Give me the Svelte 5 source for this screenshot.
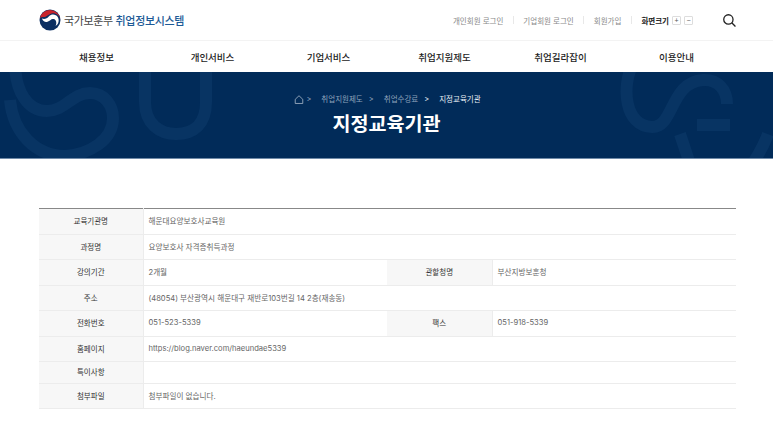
<script>
	const menus = ['채용정보', '개인서비스', '기업서비스', '취업지원제도', '취업길라잡이', '이용안내'];
	const utils = ['개인회원 로그인', '기업회원 로그인', '회원가입'];
</script>

<header class="top">
	<a class="logo" href="#top">
		<svg width="22" height="22" viewBox="0 0 22 22">
			<circle cx="11" cy="11" r="10.5" fill="#0b2f63" />
			<path d="M.7 9.5A10.5 10.5 0 0 1 21.4 10C20.5 6.5 16.5 3.5 12.5 4.5C9 5.3 8 8 5 8C3 8 1.5 8 .7 9.5Z" fill="#c8232c" />
			<path d="M3 9.5C5.5 10.5 8 9.5 10 7.2C12.5 4.8 17 5 19 8.5C20.5 11.5 19.5 15.5 16.5 17C18 14.5 17.5 10.5 14.5 10C12 9.6 11 12 8.5 12.8C6 13.5 3.8 12 3 9.5Z" fill="#fff" />
		</svg>
		<span class="logo-text">국가보훈부 <b>취업정보시스템</b></span>
	</a>
	<div class="util">
		{#each utils as item}
			<a href="#top">{item}</a>
			<i class="sep"></i>
		{/each}
		<span class="size-label">화면크기</span>
		<button class="size-btn">+</button>
		<button class="size-btn">−</button>
		<svg class="search" width="13" height="13" viewBox="0 0 14 14" fill="none" stroke="#222" stroke-width="1.4">
			<circle cx="5.8" cy="5.8" r="5" />
			<path d="M9.4 9.4L13.4 13.5" />
		</svg>
	</div>
</header>

<nav class="gnb">
	{#each menus as menu}
		<a href="#top">{menu}</a>
	{/each}
</nav>

<section class="banner">
	<svg class="deco" width="773" height="87" viewBox="0 0 773 87" fill="none" stroke="#083463" stroke-width="12">
		<path d="M15 -10C15 20 28 39 47 39C65 39 72 21 90 21C105 21 113 34 113 46C113 68 90 82 65 84C35 84 13 60 10 28" />
		<path d="M145 -10V30C145 52 160 62 176 62C194 62 206 52 206 30V-10" />
		<path d="M632 -6C622 14 624 54 652 55C674 56 670 10 703 8C718 7 727 18 727 32" />
		<path d="M697 53H730M680 62L690 92M768 62C762 78 756 86 750 96" />
	</svg>
	<div class="crumbs">
		<svg class="home" width="10" height="9" viewBox="0 0 11 10" fill="none" stroke="#a9b8ca" stroke-width="0.9">
			<path d="M1.3 9.4V4.8L5.5 .8L9.7 4.8V9.4Z" />
		</svg>
		<span class="gt">&gt;</span>
		<span>취업지원제도</span>
		<span class="gt">&gt;</span>
		<span>취업수강료</span>
		<span class="gt cur">&gt;</span>
		<span class="cur">지정교육기관</span>
	</div>
	<h1>지정교육기관</h1>
</section>

<main class="content">
	<table>
		<colgroup>
			<col style="width:104px" />
			<col style="width:244px" />
			<col style="width:105px" />
			<col />
		</colgroup>
		<tbody>
			<tr class="r1"><th>교육기관명</th><td colspan="3">해운대요양보호사교육원</td></tr>
			<tr class="r2"><th>과정명</th><td colspan="3">요양보호사 자격증취득과정</td></tr>
			<tr class="r3"><th>강의기간</th><td>2개월</td><th>관할청명</th><td>부산지방보훈청</td></tr>
			<tr class="r2"><th>주소</th><td colspan="3">(48054) 부산광역시 해운대구 재반로103번길 14 2층(재송동)</td></tr>
			<tr class="r3"><th>전화번호</th><td>051-523-5339</td><th>팩스</th><td>051-918-5339</td></tr>
			<tr class="r2"><th>홈페이지</th><td colspan="3">https://blog.naver.com/haeundae5339</td></tr>
			<tr class="r4"><th>특이사항</th><td colspan="3"></td></tr>
			<tr class="r2"><th>첨부파일</th><td colspan="3">첨부파일이 없습니다.</td></tr>
		</tbody>
	</table>
</main>

<style>
	:global(body) {
		margin: 0;
		background: #fff;
		font-family: Inter, "Noto Sans CJK KR", "Noto Sans", sans-serif;
		color: #333;
		overflow: hidden;
	}

	a {
		color: inherit;
		text-decoration: none;
	}

	.top {
		display: flex;
		align-items: center;
		justify-content: space-between;
		height: 40px;
		padding: 0 37px 0 39px;
		border-bottom: 1px solid #f3f3f3;
	}

	.logo {
		display: flex;
		align-items: center;
		gap: 3px;
	}

	.logo-text {
		font-size: 11px;
		letter-spacing: -0.35px;
		color: #444;
	}

	.logo-text b {
		font-weight: 500;
		color: #1d5a96;
	}

	.util {
		display: flex;
		align-items: center;
		font-size: 7.5px;
		color: #888;
	}

	.sep {
		width: 1px;
		height: 8px;
		margin: 0 9.5px;
		background: #e8e8e8;
	}

	.size-label {
		font-weight: 700;
		color: #222;
	}

	.size-btn {
		display: flex;
		align-items: center;
		justify-content: center;
		width: 9px;
		height: 9px;
		margin-left: 3px;
		padding: 0;
		border: 1px solid #ddd;
		border-radius: 1px;
		background: #fff;
		font-size: 7px;
		line-height: 1;
		color: #555;
	}

	.search {
		margin-left: 30px;
	}

	.gnb {
		display: grid;
		grid-template-columns: repeat(6, 116px);
		justify-content: center;
		align-items: center;
		height: 31px;
		font-size: 9.5px;
		font-weight: 500;
		color: #222;
		text-align: center;
	}

	.banner {
		position: relative;
		height: 87px;
		overflow: hidden;
		background: #012b59;
		border-bottom: 1px solid #6f8aa8;
		box-sizing: border-box;
		text-align: center;
	}

	.deco {
		position: absolute;
		left: 0;
		top: 0;
	}

	.crumbs {
		position: relative;
		display: flex;
		justify-content: center;
		align-items: center;
		gap: 5px;
		padding: 22px 0 0 2px;
		font-size: 7.5px;
		line-height: 11px;
		color: #8ea2ba;
	}

	.gt {
		margin: 0 5px 0 1px;
	}

	.home {
		margin-right: -4px;
	}

	.cur {
		color: #e8eef5;
	}

	h1 {
		position: relative;
		margin: 4px 0 0;
		font-size: 19.6px;
		line-height: 30px;
		font-weight: 700;
		color: #fff;
	}

	.content {
		padding: 49px 37px 0 39px;
	}

	table {
		width: 100%;
		table-layout: fixed;
		border-collapse: collapse;
		border-top: 1px solid #888;
		border-bottom: 1px solid #c9c9c9;
		font-size: 7.5px;
		color: #666;
	}

	tr {
		border-bottom: 1px solid #ececec;
	}

	.r1 { height: 26px; }
	.r2 { height: 25px; }
	.r3 { height: 26px; }
	.r4 { height: 22px; }

	th {
		background: #f7f7f7;
		font-weight: 400;
		color: #333;
		text-align: center;
		border-right: 1px solid #ececec;
		padding: 0 0 2px;
	}

	td {
		padding: 0 0 2px 5px;
		font-size: 7.6px;
	}
</style>
